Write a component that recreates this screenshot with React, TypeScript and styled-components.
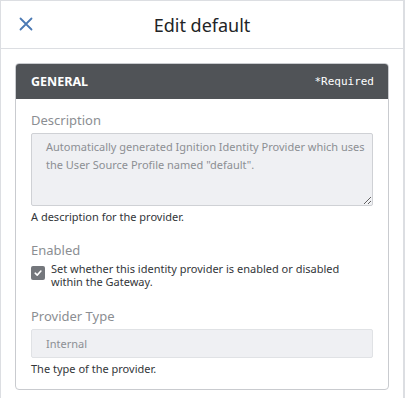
import React from 'react';
import styled, { createGlobalStyle } from 'styled-components';

const GlobalStyle = createGlobalStyle`
  html, body {
    margin: 0;
    padding: 0;
    background: #ffffff;
  }
  body {
    font-family: "Noto Sans", "Open Sans", sans-serif;
    color: #333639;
  }
`;

const Page = styled.div`
  width: 405px;
  height: 398px;
  box-sizing: border-box;
  border: 1px solid #dcdee2;
  border-bottom: none;
  border-right-width: 2px;
  overflow: hidden;
`;

const Header = styled.div`
  height: 47px;
  display: flex;
  align-items: center;
  position: relative;
  justify-content: center;
  border-bottom: 1px solid #dcdee2;
`;

const CloseButton = styled.button`
  position: absolute;
  left: 16px;
  top: 14px;
  width: 18px;
  height: 18px;
  padding: 0;
  border: none;
  background: none;
  display: flex;
  align-items: center;
  justify-content: center;
`;

const Title = styled.h1`
  margin: 0;
  font-size: 18px;
  font-weight: 400;
  color: #222426;
`;

const Body = styled.div`
  padding: 14px 14px 0 14px;
`;

const Card = styled.div`
  border: 1px solid #c9cbcf;
  border-radius: 4px;
  overflow: hidden;
`;

const CardHeader = styled.div`
  height: 35px;
  background: #505357;
  display: flex;
  align-items: center;
  justify-content: space-between;
  padding: 0 14px 0 15px;
  color: #ffffff;
`;

const CardTitle = styled.span`
  font-size: 12.5px;
  font-weight: 700;
`;

const Required = styled.span`
  font-family: "DejaVu Sans Mono", "Liberation Mono", monospace;
  font-size: 11px;
`;

const CardBody = styled.div`
  padding: 12px 15px 13px 15px;
`;

const Field = styled.div<{ $gap?: number }>`
  margin-bottom: ${p => p.$gap ?? 0}px;
`;

const Label = styled.div<{ $tight?: boolean }>`
  font-size: 13px;
  color: #8b8e92;
  line-height: 18px;
  margin-bottom: ${p => (p.$tight ? 3 : 4)}px;
`;

const TextArea = styled.textarea`
  display: block;
  box-sizing: border-box;
  width: 100%;
  height: 73px;
  padding: 4px 4px 4px 14px;
  border: 1px solid #cfd1d5;
  border-radius: 2px;
  background: #eff0f3;
  color: #8c8f93;
  font-family: "Noto Sans", sans-serif;
  font-size: 11px;
  line-height: 18px;
  resize: vertical;
  overflow: hidden;
`;

const Input = styled.input`
  display: block;
  box-sizing: border-box;
  width: 100%;
  height: 29px;
  padding: 0 14px;
  border: 1px solid #e0e2e5;
  border-radius: 2px;
  background: #eff0f3;
  color: #8c8f93;
  font-family: "Noto Sans", sans-serif;
  font-size: 11px;
`;

const Help = styled.div`
  font-size: 11px;
  color: #333639;
  margin-top: 3px;
  line-height: 15px;
`;

const CheckRow = styled.label`
  display: flex;
  align-items: flex-start;
  gap: 6px;
`;

const CheckBox = styled.span`
  flex: none;
  width: 14px;
  height: 14px;
  margin-top: 4px;
  border-radius: 2px;
  background: #74777c;
  display: flex;
  align-items: center;
  justify-content: center;
`;

const CheckText = styled.span`
  font-size: 11px;
  line-height: 13px;
  color: #333639;
`;

export default function App() {
  return (
    <>
      <GlobalStyle />
      <Page>
        <Header>
          <CloseButton aria-label="Close">
            <svg width="14" height="14" viewBox="0 0 14 14">
              <path d="M1.5 1.5 L12.5 12.5 M12.5 1.5 L1.5 12.5" stroke="#4a79b4" strokeWidth="1.8" strokeLinecap="round" />
            </svg>
          </CloseButton>
          <Title>Edit default</Title>
        </Header>
        <Body>
          <Card>
            <CardHeader>
              <CardTitle>GENERAL</CardTitle>
              <Required>*Required</Required>
            </CardHeader>
            <CardBody>
              <Field $gap={17}>
                <Label>Description</Label>
                <TextArea
                  disabled
                  defaultValue={'Automatically generated Ignition Identity Provider which uses the User Source Profile named "default".'}
                />
                <Help>A description for the provider.</Help>
              </Field>
              <Field $gap={19}>
                <Label $tight>Enabled</Label>
                <CheckRow>
                  <CheckBox>
                    <svg width="10" height="10" viewBox="0 0 10 10">
                      <path d="M2.2 5.2 L4.2 7.1 L7.9 3" stroke="#ffffff" strokeWidth="1.6" fill="none" strokeLinecap="round" strokeLinejoin="round" />
                    </svg>
                  </CheckBox>
                  <CheckText>Set whether this identity provider is enabled or disabled within the Gateway.</CheckText>
                </CheckRow>
              </Field>
              <Field>
                <Label>Provider Type</Label>
                <Input disabled value="Internal" readOnly />
                <Help>The type of the provider.</Help>
              </Field>
            </CardBody>
          </Card>
        </Body>
      </Page>
    </>
  );
}
